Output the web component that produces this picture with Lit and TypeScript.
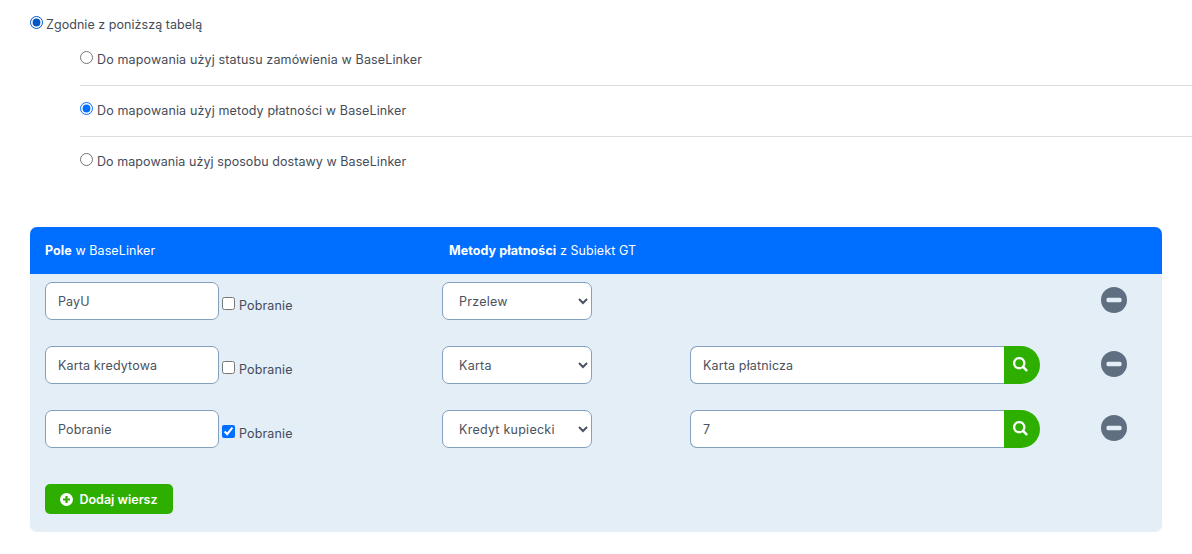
import { LitElement, html, css, svg } from "lit";
import { customElement } from "lit/decorators.js";

interface Row { name: string; cod: boolean; method: string; extra: string | null }

const ROWS: Row[] = [
  { name: "PayU", cod: false, method: "Przelew", extra: null },
  { name: "Karta kredytowa", cod: false, method: "Karta", extra: "Karta płatnicza" },
  { name: "Pobranie", cod: true, method: "Kredyt kupiecki", extra: "7" },
];
const METHODS = ["Przelew", "Karta", "Kredyt kupiecki"];
const SEARCH = svg`<path d="M6.2 0a6.2 6.2 0 1 0 3.5 11.3l2.9 2.9a1.1 1.1 0 0 0 1.55 0l.2-.2a1.1 1.1 0 0 0 0-1.55l-2.9-2.9A6.2 6.2 0 0 0 6.2 0Zm0 2.3a3.9 3.9 0 1 1 0 7.8 3.9 3.9 0 0 1 0-7.8Z" fill="#fff"/>`;

@customElement("app-root")
export class AppRoot extends LitElement {
  static styles = css`
    :host { display: block; width: 1192px; height: 554px; overflow: hidden; background: #fff;
      font-family: Inter, "Noto Sans", "Liberation Sans", sans-serif; font-size: 12.5px; letter-spacing: 0.14px; color: #454c59; }
    input[type=radio], input[type=checkbox] { margin: 0; width: 13px; height: 13px; accent-color: #006eff; }
    .top { display: flex; align-items: flex-start; gap: 3px; padding: 16px 0 0 30px; height: 16px; line-height: 17px; letter-spacing: 0.05px; }
    .options { margin: 19px 0 0 80px; height: 176px; display: flex; flex-direction: column; gap: 16px; }
    .opt { display: flex; gap: 4px; height: 34px; line-height: 17px; border-bottom: 1px solid #dcdee0; flex: none; }
    .opt:last-child { border-bottom: 0; letter-spacing: 0.07px; }
    .panel { margin: 0 30px; width: 1132px; height: 305px; background: #e3eef7; border-radius: 7px; overflow: hidden; box-sizing: border-box; }
    .head { display: flex; height: 47px; align-items: center; background: #006eff; color: #fff; padding: 0 15px; letter-spacing: 0.08px; }
    .head b { font-weight: 700; }
    .h1 { width: 404px; }
    .rows { display: flex; flex-direction: column; gap: 26px; padding: 8px 15px 0; }
    .row { display: flex; height: 38px; align-items: flex-start; }
    .field { box-sizing: border-box; height: 38px; border: 1px solid #84a0c0; border-radius: 7px; background: #fff;
      font: inherit; letter-spacing: inherit; color: #4a5260; padding: 0 12px; outline: none; margin: 0; }
    .name { width: 174px; }
    .cod { display: flex; width: 223px; padding: 15px 0 0 3px; gap: 4px; box-sizing: border-box; line-height: 17px; }
    select.field { width: 150px; padding: 0 8px 0 12px; letter-spacing: 0.25px; }
    .search { display: flex; margin-left: 98px; width: 350px; }
    .search .field { width: 314px; border-radius: 7px 0 0 7px; border-right: 0; }
    .go { box-sizing: border-box; width: 36px; height: 38px; border: 0; background: #2eaf00; border-radius: 0 19px 19px 0; padding: 0 3px 1px 0;
      display: flex; align-items: center; justify-content: center; }
    .spacer { width: 350px; margin-left: 98px; }
    .minus { width: 26px; height: 26px; margin: 5px 0 0 61px; display: block; }
    .add { margin: 36px 0 0 15px; width: 128px; height: 30px; box-sizing: border-box; border: 0; border-radius: 5px; background: #2eaf00;
      color: #fff; font: inherit; letter-spacing: 0; font-weight: 600; display: flex; align-items: center; justify-content: center; gap: 6px; padding: 0; }
  `;

  private minus() {
    return html`<svg class="minus" viewBox="0 0 26 26"><circle cx="13" cy="13" r="13" fill="#5f6e80"/><rect x="5.5" y="10.7" width="15" height="4.6" rx="1.5" fill="#e3eef7"/></svg>`;
  }

  private row(r: Row) {
    return html`<div class="row">
      <input class="field name" .value=${r.name} />
      <label class="cod"><input type="checkbox" ?checked=${r.cod} /><span>Pobranie</span></label>
      <select class="field">${METHODS.map((m) => html`<option ?selected=${m === r.method}>${m}</option>`)}</select>
      ${r.extra === null
        ? html`<div class="spacer"></div>`
        : html`<div class="search"><input class="field" .value=${r.extra} /><button class="go"><svg width="15" height="15" viewBox="0 0 15 15">${SEARCH}</svg></button></div>`}
      ${this.minus()}
    </div>`;
  }

  render() {
    return html`
      <label class="top"><input type="radio" name="mode" checked /><span>Zgodnie z poniższą tabelą</span></label>
      <div class="options">
        <label class="opt"><input type="radio" name="by" /><span>Do mapowania użyj statusu zamówienia w BaseLinker</span></label>
        <label class="opt"><input type="radio" name="by" checked /><span>Do mapowania użyj metody płatności w BaseLinker</span></label>
        <label class="opt"><input type="radio" name="by" /><span>Do mapowania użyj sposobu dostawy w BaseLinker</span></label>
      </div>
      <div class="panel">
        <div class="head"><div class="h1"><b>Pole</b> w BaseLinker</div><div><b>Metody płatności</b> z Subiekt GT</div></div>
        <div class="rows">${ROWS.map((r) => this.row(r))}</div>
        <button class="add"><svg width="13" height="13" viewBox="0 0 13 13"><circle cx="6.5" cy="6.5" r="6.5" fill="#fff"/><path d="M6.5 3v7M3 6.5h7" stroke="#2eaf00" stroke-width="2.2"/></svg>Dodaj wiersz</button>
      </div>
    `;
  }
}
